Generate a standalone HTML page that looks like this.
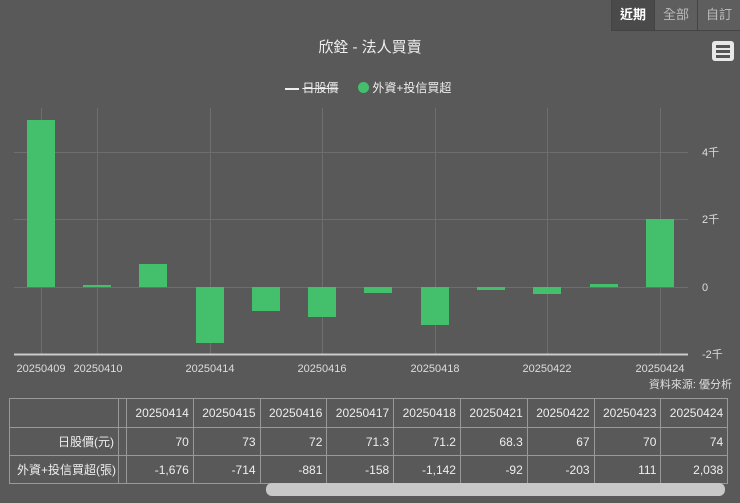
<!DOCTYPE html>
<html><head><meta charset="utf-8"><style>
body{margin:0;width:740px;height:503px;background:#595959;overflow:hidden;font-family:"Liberation Sans","Noto Sans CJK TC",sans-serif;color:#eee;position:relative}
.btns{position:absolute;top:0;right:0;display:flex}
.btns div{width:42px;height:30px;line-height:30px;text-align:center;font-size:13px;color:#bbb;background:#5e5e5e;border-left:1px solid #444;border-bottom:1px solid #444}
.btns div.on{background:#4a4a4a;color:#fff;font-weight:bold}
.title{position:absolute;top:36px;left:0;width:740px;text-align:center;font-size:15px;color:#eee}
.menu{position:absolute;left:712px;top:41px;width:22px;height:20px;background:#e8e8e8;border-radius:3px}
.menu i{position:absolute;left:4px;width:14px;height:3px;background:#555}
.leg{position:absolute;top:79px;font-size:12px}
svg{position:absolute;left:0;top:0}
table{position:absolute;left:9px;top:398px;border-collapse:collapse;font-size:12px;color:#eee;table-layout:fixed;width:718px}
td{border:1px solid #999;height:28px;padding:0 4px;text-align:right;box-sizing:border-box;white-space:nowrap;overflow:hidden}
.sb{position:absolute;left:266px;top:483px;width:459px;height:13px;background:#c8c8c8;border-radius:6px}
</style></head><body>
<div class="btns"><div class="on">近期</div><div>全部</div><div>自訂</div></div>
<div class="title">欣銓 - 法人買賣</div>
<div class="menu"><i style="top:4px"></i><i style="top:9px"></i><i style="top:14px"></i></div>
<div class="leg" style="left:285px"><span style="display:inline-block;width:14px;height:2px;background:#eee;vertical-align:middle"></span> <span style="text-decoration:line-through">日股價</span></div>
<div class="leg" style="left:358px"><span style="display:inline-block;width:11px;height:11px;border-radius:6px;background:#44c06c;vertical-align:-1px"></span> 外資+投信買超</div>
<svg width="740" height="400" font-family="Liberation Sans" font-size="11" fill="#ddd">
<g stroke="#6e6e6e" stroke-width="1">
<line x1="14" y1="152.5" x2="688" y2="152.5"/><line x1="14" y1="219.5" x2="688" y2="219.5"/><line x1="14" y1="287.5" x2="688" y2="287.5"/>
<line x1="41.5" y1="108" x2="41.5" y2="354"/><line x1="97.5" y1="108" x2="97.5" y2="354"/><line x1="210.5" y1="108" x2="210.5" y2="354"/><line x1="322.5" y1="108" x2="322.5" y2="354"/><line x1="435.5" y1="108" x2="435.5" y2="354"/><line x1="547.5" y1="108" x2="547.5" y2="354"/><line x1="660.5" y1="108" x2="660.5" y2="354"/>
</g>
<line x1="14" y1="354.5" x2="688" y2="354.5" stroke="#ccc" stroke-width="2"/>
<g fill="#44c06c">
<rect x="27" y="120" width="28" height="167"/>
<rect x="83" y="285" width="28" height="2"/>
<rect x="139" y="264" width="28" height="23"/>
<rect x="196" y="287" width="28" height="56"/>
<rect x="252" y="287" width="28" height="24"/>
<rect x="308" y="287" width="28" height="30"/>
<rect x="364" y="287" width="28" height="6"/>
<rect x="421" y="287" width="28" height="38"/>
<rect x="477" y="287" width="28" height="3"/>
<rect x="533" y="287" width="28" height="7"/>
<rect x="590" y="284" width="28" height="3"/>
<rect x="646" y="219" width="28" height="68"/>
</g>
<g font-size="11"><text x="702" y="156">4千</text><text x="702" y="223">2千</text><text x="702" y="291">0</text><text x="702" y="358">-2千</text></g>
<g text-anchor="middle"><text x="41" y="372">20250409</text><text x="98" y="372">20250410</text><text x="210" y="372">20250414</text><text x="322" y="372">20250416</text><text x="435" y="372">20250418</text><text x="547" y="372">20250422</text><text x="660" y="372">20250424</text></g>
<text x="732" y="388" text-anchor="end">資料來源: 優分析</text>
</svg>
<table>
<colgroup><col style="width:109px"><col style="width:8px"><col span="9" style="width:66.8px"></colgroup>
<tr style="height:29px"><td></td><td style="padding:0"></td><td>20250414</td><td>20250415</td><td>20250416</td><td>20250417</td><td>20250418</td><td>20250421</td><td>20250422</td><td>20250423</td><td>20250424</td></tr>
<tr><td>日股價(元)</td><td style="padding:0"></td><td>70</td><td>73</td><td>72</td><td>71.3</td><td>71.2</td><td>68.3</td><td>67</td><td>70</td><td>74</td></tr>
<tr><td style="padding:0 2px">外資+投信買超(張)</td><td style="padding:0"></td><td>-1,676</td><td>-714</td><td>-881</td><td>-158</td><td>-1,142</td><td>-92</td><td>-203</td><td>111</td><td>2,038</td></tr>
</table>
<div class="sb"></div>
</body></html>
